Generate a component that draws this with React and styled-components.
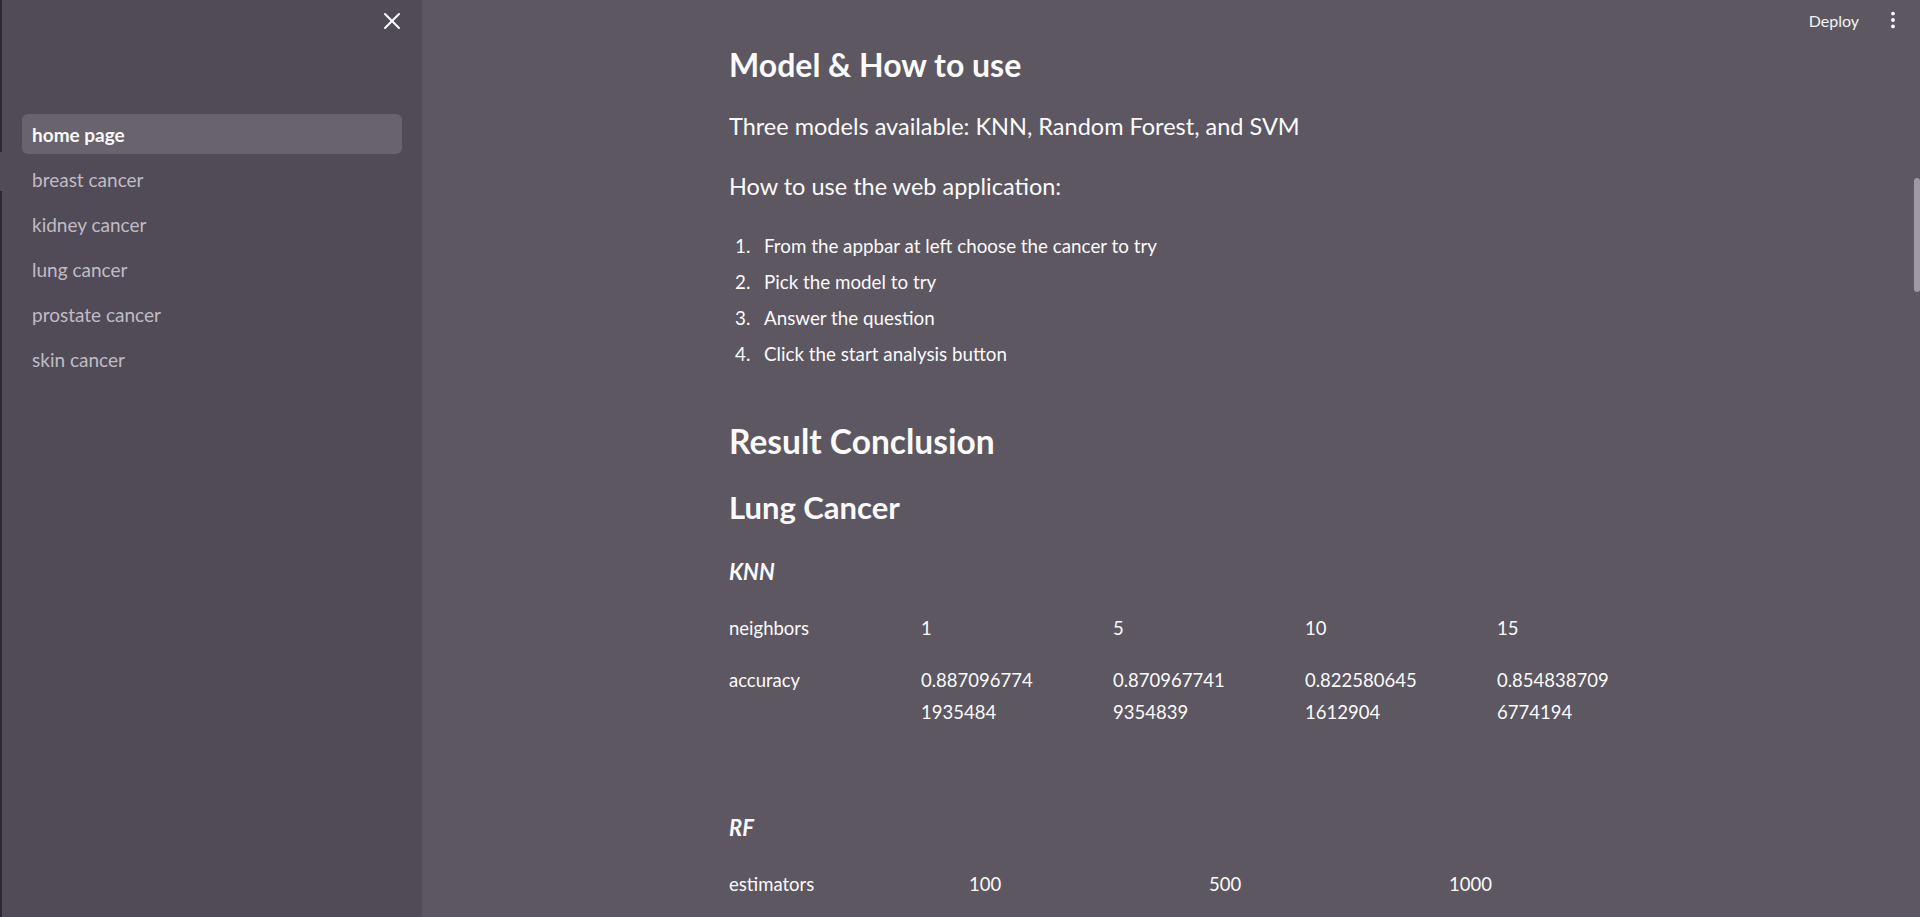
import React from "react";
import styled, { createGlobalStyle } from "styled-components";
import { X, EllipsisVertical } from "lucide-react";

const pages = ["home page", "breast cancer", "kidney cancer", "lung cancer", "prostate cancer", "skin cancer"];

const steps = [
  "From the appbar at left choose the cancer to try",
  "Pick the model to try",
  "Answer the question",
  "Click the start analysis button",
];

// accuracy values are long, streamlit wraps them inside the narrow columns
const knnRows = [
  { label: "neighbors", cells: [["1"], ["5"], ["10"], ["15"]] },
  {
    label: "accuracy",
    cells: [
      ["0.887096774", "1935484"],
      ["0.870967741", "9354839"],
      ["0.822580645", "1612904"],
      ["0.854838709", "6774194"],
    ],
  },
];

const rfRows = [{ label: "estimators", cells: [["100"], ["500"], ["1000"]] }];

const App = () => {
  return (
    <Shell>
      <GlobalStyle />
      <Sidebar>
        <SidebarHeader>
          <CloseButton aria-label="Close sidebar">
            <X size={28} strokeWidth={1.8} />
          </CloseButton>
        </SidebarHeader>
        <Nav>
          {pages.map((p, i) => (
            <NavLink key={p} $active={i === 0}>
              {p}
            </NavLink>
          ))}
        </Nav>
      </Sidebar>

      <Main>
        <Toolbar>
          <DeployButton>Deploy</DeployButton>
          <MenuButton aria-label="Main menu">
            <EllipsisVertical size={22} strokeWidth={2.2} />
          </MenuButton>
        </Toolbar>

        <ContentArea>
          <Block>
            <Heading $mt={4} $size={32}>Model &amp; How to use</Heading>
            <Lead $mt={25}>Three models available: KNN, Random Forest, and SVM</Lead>
            <Lead $mt={30}>How to use the web application:</Lead>
            <Steps>
              {steps.map((s, i) => (
                <Step key={s}>
                  <StepNum>{i + 1}.</StepNum>
                  {s}
                </Step>
              ))}
            </Steps>

            <Heading $mt={50} $size={33.5}>Result Conclusion</Heading>
            <Heading $mt={24} $size={31}>Lung Cancer</Heading>

            <ModelTitle $mt={29}>KNN</ModelTitle>
            {knnRows.map((row, i) => (
              <Columns key={row.label} $count={5} $mt={i === 0 ? 25 : 20}>
                <Cell>{row.label}</Cell>
                {row.cells.map((lines, j) => (
                  <Cell key={j}>
                    {lines.map((l) => (
                      <div key={l}>{l}</div>
                    ))}
                  </Cell>
                ))}
              </Columns>
            ))}

            <ModelTitle $mt={85}>RF</ModelTitle>
            {rfRows.map((row) => (
              <Columns key={row.label} $count={4} $mt={25}>
                <Cell>{row.label}</Cell>
                {row.cells.map((lines, j) => (
                  <Cell key={j}>
                    {lines.map((l) => (
                      <div key={l}>{l}</div>
                    ))}
                  </Cell>
                ))}
              </Columns>
            ))}
          </Block>
        </ContentArea>

        <ScrollThumb />
      </Main>
    </Shell>
  );
};

export default App;

const GlobalStyle = createGlobalStyle`
  * { box-sizing: border-box; }
  html, body {
    margin: 0;
    height: 100%;
    background: #5d5761;
  }
  body {
    font-family: Lato, "Open Sans", sans-serif;
    color: #fafafa;
    overflow: hidden;
  }
`;

const Shell = styled.div`
  display: flex;
  height: 100vh;
  overflow: hidden;
`;

const Sidebar = styled.aside`
  position: relative;
  width: 422px;
  flex-shrink: 0;
  background: #514b57;
  border-left: 2px solid #2c2730;

  /* the little break in the window edge */
  &::before {
    content: "";
    position: absolute;
    left: -2px;
    top: 152px;
    width: 2px;
    height: 39px;
    background: #514b57;
  }
`;

const SidebarHeader = styled.div`
  height: 42px;
  display: flex;
  justify-content: flex-end;
  align-items: center;
  padding-right: 16px;
`;

const CloseButton = styled.button`
  width: 28px;
  height: 28px;
  padding: 0;
  border: none;
  background: transparent;
  color: #fafafa;
  display: flex;
  align-items: center;
  justify-content: center;
  cursor: pointer;
`;

const Nav = styled.nav`
  margin-top: 72px;
  padding: 0 20px;
  display: flex;
  flex-direction: column;
  gap: 5px;
`;

const NavLink = styled.a`
  height: 40px;
  display: flex;
  align-items: center;
  padding: 0 10px;
  border-radius: 6px;
  font-size: 19px;
  font-weight: ${(p) => (p.$active ? 700 : 400)};
  color: ${(p) => (p.$active ? "#fafafa" : "#c0bcc3")};
  background: ${(p) => (p.$active ? "#69636d" : "transparent")};
  cursor: pointer;
`;

const Main = styled.main`
  position: relative;
  flex: 1;
  display: flex;
  flex-direction: column;
  overflow: hidden;
`;

const Toolbar = styled.header`
  height: 40px;
  flex-shrink: 0;
  display: flex;
  justify-content: flex-end;
  align-items: center;
  gap: 23px;
  padding-right: 16px;
`;

const DeployButton = styled.button`
  border: none;
  background: transparent;
  padding: 0;
  color: #f4f4f4;
  font-family: inherit;
  font-size: 16px;
  cursor: pointer;
`;

const MenuButton = styled.button`
  width: 22px;
  height: 22px;
  padding: 0;
  border: none;
  background: transparent;
  color: #fafafa;
  display: flex;
  align-items: center;
  justify-content: center;
`;

const ContentArea = styled.div`
  padding-right: 4px;
`;

const Block = styled.div`
  width: 880px;
  margin: 0 auto;
  display: flex;
  flex-direction: column;
`;

const Heading = styled.h2`
  margin: ${(p) => p.$mt}px 0 0;
  font-size: ${(p) => p.$size}px;
  font-weight: 700;
  line-height: 42px;
`;

const Lead = styled.p`
  margin: ${(p) => p.$mt}px 0 0;
  font-size: 23.5px;
  font-weight: 400;
  line-height: 30px;
`;

const Steps = styled.ol`
  list-style: none;
  margin: 29px 0 0;
  padding: 0;
  display: flex;
  flex-direction: column;
  gap: 4px;
`;

const Step = styled.li`
  display: flex;
  font-size: 18.8px;
  line-height: 32px;
`;

const StepNum = styled.span`
  width: 35px;
  padding-left: 6px;
  flex-shrink: 0;
`;

const ModelTitle = styled.h4`
  margin: ${(p) => p.$mt}px 0 0;
  font-size: 22px;
  font-weight: 700;
  font-style: italic;
  line-height: 30px;
`;

const Columns = styled.div`
  margin-top: ${(p) => p.$mt}px;
  display: grid;
  grid-template-columns: repeat(${(p) => p.$count}, 1fr);
  column-gap: 80px;
`;

const Cell = styled.div`
  font-size: 18.5px;
  line-height: 32px;
  white-space: nowrap;
`;

const ScrollThumb = styled.div`
  position: absolute;
  right: 0;
  top: 178px;
  width: 6px;
  height: 114px;
  border-radius: 3px;
  background: #9e9aa3;
`;
